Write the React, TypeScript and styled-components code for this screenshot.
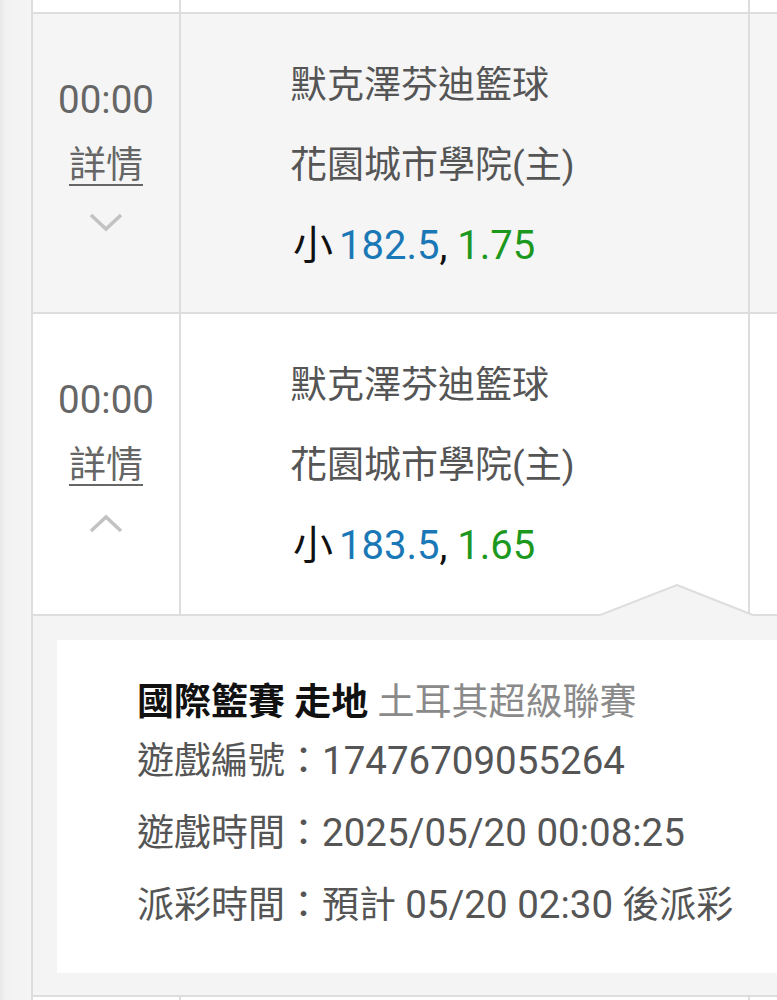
import { createGlobalStyle, styled } from 'styled-components';

const GlobalStyle = createGlobalStyle`
    html, body {
        margin: 0;
        padding: 0;
        background: #ffffff;
        overflow: hidden;
    }
    body {
        font-family: Roboto, "Noto Sans CJK TC", sans-serif;
    }
`;

type Match = {
    league: string;
    home: string;
    pick: string;
    line: string;
    odds: string;
    open: boolean;
};

const matches: Match[] = [
    { league: '默克澤芬迪籃球', home: '花園城市學院(主)', pick: '小', line: '182.5', odds: '1.75', open: false },
    { league: '默克澤芬迪籃球', home: '花園城市學院(主)', pick: '小', line: '183.5', odds: '1.65', open: true },
];

const Chevron = ({ up }: { up: boolean }) => (
    <svg width="34" height="20" viewBox="0 0 34 20">
        <polyline
            points={up ? '2,17 17,3 32,17' : '2,3 17,17 32,3'}
            fill="none"
            stroke="#c2c2c2"
            strokeWidth="3.5"
        />
    </svg>
);

export default function App() {
    return (
        <>
            <GlobalStyle />
            <Page>
                <Strip />
                <Table>
                    <Row $height={14}>
                        <TimeCell />
                        <MainCell />
                        <RestCell />
                    </Row>
                    {matches.map((m, idx) => (
                        <Row key={idx} $height={idx === 0 ? 300 : 302} $shaded={!m.open}>
                            <TimeCell>
                                <Time>00:00</Time>
                                <Detail>詳情</Detail>
                                <ChevronBox $up={m.open}>
                                    <Chevron up={m.open} />
                                </ChevronBox>
                            </TimeCell>
                            <MainCell>
                                <TeamLine>{m.league}</TeamLine>
                                <TeamLine>{m.home}</TeamLine>
                                <BetLine>
                                    {m.pick}<Blue>{m.line}</Blue>, <Green>{m.odds}</Green>
                                </BetLine>
                            </MainCell>
                            <RestCell />
                        </Row>
                    ))}
                    <Panel>
                        <Pointer width="155" height="36" viewBox="0 0 155 36">
                            <polygon points="0,31 77,1 153,31 153,36 0,36" fill="#f4f4f4" />
                            <polyline points="0,31 77,1 153,31" fill="none" stroke="#dddddd" strokeWidth="2" />
                        </Pointer>
                        <Card>
                            <Title>
                                <strong>國際籃賽 走地</strong> <League>土耳其超級聯賽</League>
                            </Title>
                            <Info>遊戲編號：<Num>17476709055264</Num></Info>
                            <Info>遊戲時間：<Num>2025/05/20 00:08:25</Num></Info>
                            <Info>派彩時間：預計 <Num>05/20 02:30</Num> 後派彩</Info>
                        </Card>
                    </Panel>
                    <Row $height={10}>
                        <TimeCell />
                        <MainCell />
                        <RestCell />
                    </Row>
                </Table>
            </Page>
        </>
    );
}

const Page = styled.div`
    display: flex;
    width: 777px;
    height: 1000px;
    overflow: hidden;
`;

const Strip = styled.div`
    flex: none;
    width: 31px;
    background: linear-gradient(to right, #e9e9e9, #f2f2f2 20%, #f5f5f5);
`;

const Table = styled.div`
    flex: none;
    width: 880px;
    border-left: 2px solid #dddddd;
    display: flex;
    flex-direction: column;
`;

const Row = styled.div<{ $height: number; $shaded?: boolean }>`
    flex: none;
    box-sizing: border-box;
    display: grid;
    grid-template-columns: 148px 569px 1fr;
    height: ${({ $height }) => $height}px;
    border-bottom: 2px solid #dddddd;
    background: ${({ $shaded }) => ($shaded ? '#f5f5f5' : '#ffffff')};
`;

const TimeCell = styled.div`
    box-sizing: border-box;
    border-right: 2px solid #dddddd;
    display: flex;
    flex-direction: column;
    align-items: center;
    padding-top: 64px;
    color: #666666;
    font-size: 37px;
`;

const Time = styled.div`
    font-size: 38.5px;
    line-height: 44px;
`;

const Detail = styled.div`
    margin-top: 22px;
    line-height: 44px;
    text-decoration: underline;
    text-decoration-thickness: 2px;
    text-underline-offset: 6px;
`;

const ChevronBox = styled.div<{ $up: boolean }>`
    margin-top: ${({ $up }) => ($up ? 26 : 24)}px;
    height: 20px;
    display: flex;
`;

const MainCell = styled.div`
    box-sizing: border-box;
    border-right: 2px solid #dddddd;
    padding: 32px 0 0 109px;
    color: #555555;
    font-size: 37px;
`;

const RestCell = styled.div``;

const TeamLine = styled.div`
    line-height: 80px;
    white-space: nowrap;
`;

const BetLine = styled.div`
    line-height: 80px;
    white-space: nowrap;
    color: #111111;
    font-size: 40px;
    padding-left: 3px;
`;

const Blue = styled.span`
    margin-left: 6px;
    color: #1b78b6;
`;

const Green = styled.span`
    color: #1d981f;
`;

const Panel = styled.div`
    flex: none;
    position: relative;
    box-sizing: border-box;
    height: 381px;
    padding: 24px 0 0 24px;
    background: #f4f4f4;
    border-bottom: 2px solid #dddddd;
`;

const Pointer = styled.svg`
    position: absolute;
    top: -32px;
    left: 567px;
`;

const Card = styled.div`
    box-sizing: border-box;
    height: 333px;
    padding: 41px 0 0 80px;
    background: #ffffff;
    color: #555555;
    font-size: 37px;
`;

const Title = styled.div`
    line-height: 44px;
    white-space: nowrap;
    color: #111111;

    strong {
        font-weight: 700;
    }
`;

const League = styled.span`
    color: #8a8a8a;
`;

const Info = styled.div`
    line-height: 71px;
    white-space: nowrap;
`;

const Num = styled.span`
    font-size: 38.5px;
`;
